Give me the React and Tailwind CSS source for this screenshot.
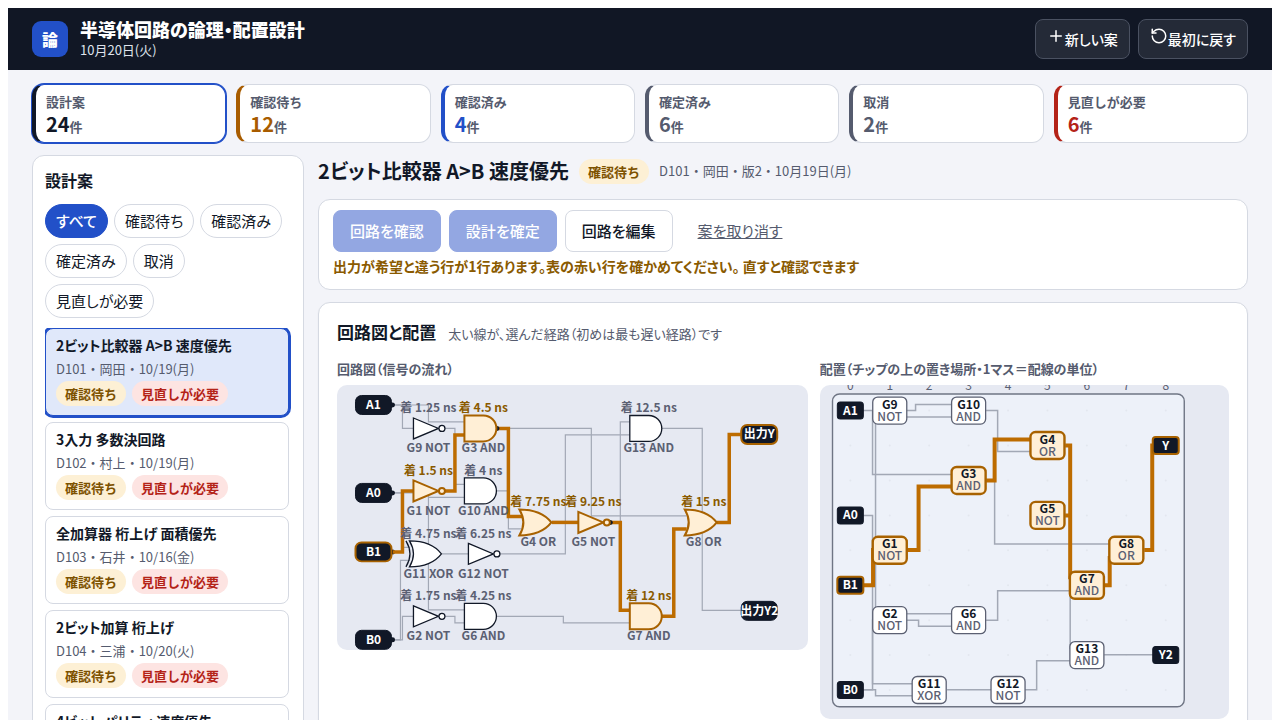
import { useState } from 'react';
import { Plus, RotateCcw } from 'lucide-react';

const STATS = [
  { label: '設計案', count: 24, border: 'border-l-[#111827]', text: 'text-[#111827]' },
  { label: '確認待ち', count: 12, border: 'border-l-[#a85c00]', text: 'text-[#a85c00]' },
  { label: '確認済み', count: 4, border: 'border-l-[#2250c8]', text: 'text-[#2250c8]' },
  { label: '確定済み', count: 6, border: 'border-l-[#555b6e]', text: 'text-[#555b6e]' },
  { label: '取消', count: 2, border: 'border-l-[#555b6e]', text: 'text-[#555b6e]' },
  { label: '見直しが必要', count: 6, border: 'border-l-[#b42318]', text: 'text-[#b42318]' },
];

const FILTERS = ['すべて', '確認待ち', '確認済み', '確定済み', '取消', '見直しが必要'];

const DESIGNS = [
  { id: 'D101', name: '2ビット比較器 A>B 速度優先', owner: '岡田', date: '10/19(月)' },
  { id: 'D102', name: '3入力 多数決回路', owner: '村上', date: '10/19(月)' },
  { id: 'D103', name: '全加算器 桁上げ 面積優先', owner: '石井', date: '10/16(金)' },
  { id: 'D104', name: '2ビット加算 桁上げ', owner: '三浦', date: '10/20(火)' },
  { id: 'D105', name: '4ビット パリティ 速度優先', owner: '岡田', date: '10/20(火)' },
];

// circuit diagram
const GATES = [
  { id: 'G9', type: 'NOT', x: 91.5, y: 43.5, time: '1.25' },
  { id: 'G1', type: 'NOT', x: 91.5, y: 106, time: '1.5', hot: true },
  { id: 'G11', type: 'XOR', x: 91.5, y: 169, time: '4.75' },
  { id: 'G2', type: 'NOT', x: 91.5, y: 231.5, time: '1.75' },
  { id: 'G3', type: 'AND', x: 146.5, y: 43.5, time: '4.5', hot: true },
  { id: 'G10', type: 'AND', x: 146.5, y: 106, time: '4' },
  { id: 'G12', type: 'NOT', x: 146.5, y: 169, time: '6.25' },
  { id: 'G6', type: 'AND', x: 146.5, y: 231.5, time: '4.25' },
  { id: 'G4', type: 'OR', x: 201.5, y: 137.5, time: '7.75', hot: true },
  { id: 'G5', type: 'NOT', x: 256.5, y: 137.5, time: '9.25', hot: true },
  { id: 'G13', type: 'AND', x: 312, y: 43.5, time: '12.5' },
  { id: 'G7', type: 'AND', x: 312, y: 231.5, time: '12', hot: true },
  { id: 'G8', type: 'OR', x: 367, y: 137.5, time: '15', hot: true },
];

const PORTS = [
  { label: 'A1', x: 36.5, y: 20 },
  { label: 'A0', x: 36.5, y: 108 },
  { label: 'B1', x: 36.5, y: 167, hot: true },
  { label: 'B0', x: 36.5, y: 255 },
  { label: '出力Y', x: 422.5, y: 49.5, hot: true },
  { label: '出力Y2', x: 422.5, y: 226 },
];

const WIRES = [
  'M56 20H65.5V43.5H77',
  'M56 20H91.5V37H128',
  'M108 43.5H118V99.5H128',
  'M56 108H91.5V112.5H128',
  'M91.5 112.5V225H128',
  'M56 108H65.5V162.5H73',
  'M56 255H63.5V175.5H73',
  'M56 255H65.5V231.5H77',
  'M105 169H132',
  'M163 169H228.5V50H293',
  'M160 43.5H254.5V131H350',
  'M160 106H171.5V144H186',
  'M283.5 137.5V37H293',
  'M108 231.5H118V238H128',
  'M160 231.5H226.5V238H293',
  'M325 43.5H365.5V225.5H404',
];

const HOT_WIRES = [
  'M56 167H65.5V106H77',
  'M108 106H118V50H128',
  'M160 43.5H171.5V131.5H186',
  'M215 137.5H242',
  'M273 137.5H283.5V225.5H293',
  'M325 231.5H337V144H350',
  'M380 137.5H392.5V49.5H404',
];

// chip placement, in grid cells
const CELLS = [
  { id: 'A1', col: 0, row: 0, pin: true },
  { id: 'A0', col: 0, row: 3, pin: true },
  { id: 'B1', col: 0, row: 5, pin: true, hot: true },
  { id: 'B0', col: 0, row: 8, pin: true },
  { id: 'Y', col: 8, row: 1, pin: true, hot: true },
  { id: 'Y2', col: 8, row: 7, pin: true },
  { id: 'G9', type: 'NOT', col: 1, row: 0 },
  { id: 'G10', type: 'AND', col: 3, row: 0 },
  { id: 'G4', type: 'OR', col: 5, row: 1, hot: true },
  { id: 'G3', type: 'AND', col: 3, row: 2, hot: true },
  { id: 'G5', type: 'NOT', col: 5, row: 3, hot: true },
  { id: 'G1', type: 'NOT', col: 1, row: 4, hot: true },
  { id: 'G8', type: 'OR', col: 7, row: 4, hot: true },
  { id: 'G7', type: 'AND', col: 6, row: 5, hot: true },
  { id: 'G2', type: 'NOT', col: 1, row: 6 },
  { id: 'G6', type: 'AND', col: 3, row: 6 },
  { id: 'G13', type: 'AND', col: 6, row: 7 },
  { id: 'G11', type: 'XOR', col: 2, row: 8 },
  { id: 'G12', type: 'NOT', col: 4, row: 8 },
];

const ROUTES = [
  'M43 25.5H53',
  'M52.5 25.5V89.5H132',
  'M87 25.5H95.5V19.5H132',
  'M132 32H55.5V228.5H132',
  'M43 130.5H52.5V298.5H93',
  'M43 304.5H52.5V235H56',
  'M43 304.5H55.5V310.5H93',
  'M87 235H98.5V241H132',
  'M166 235H177.5V205.5H250',
  'M127 304.5H171',
  'M205 304.5H216.5V275.5H250',
  'M166 25.5H177.5V66.5H210',
  'M174.5 95.5V159H289',
  'M250 130.5V264',
  'M284 269.5H333',
];

const HOT_ROUTES = [
  'M43 200H53V163',
  'M87 165H98.5V101.5H132',
  'M166 95.5H174.5V54.5H210',
  'M245 60.5H250V194',
  'M245 130.5H250',
  'M284 200H289.5V171',
  'M324 165H332V60.5H334',
];

const SCALE = [0, 1, 2, 3, 4, 5, 6, 7, 8];

const cellX = (col) => 30.3 + col * 39.4;
const cellY = (row) => 25.6 + row * 34.9;

function Badge({ tone, children }) {
  const color = tone === 'red' ? 'bg-[#fde4e2] text-[#b42318]' : 'bg-[#fdf0d5] text-[#7d5200]';
  return (
    <span className={`inline-block rounded-full px-[9px] py-[3px] text-[13px] leading-[19px] font-bold [font-feature-settings:normal] ${color}`}>
      {children}
    </span>
  );
}

function GateShape({ type, hot }) {
  const style = { fill: hot ? '#ffefd6' : '#fff', stroke: hot ? '#a86200' : '#111827', strokeWidth: hot ? 2 : 1.3 };
  if (type === 'NOT') {
    return (
      <g {...style}>
        <path d="M-15 -10.5L10 0L-15 10.5Z" />
        <circle cx="13.5" cy="0" r="3" />
      </g>
    );
  }
  if (type === 'AND') {
    return <path {...style} d="M-19 -13H0A13 13 0 0 1 0 13H-19Z" />;
  }
  return (
    <g {...style}>
      <path d="M-19 -13Q3 -13 13 0Q3 13 -19 13Q-11 0 -19 -13Z" />
      {type === 'XOR' && <path d="M-22.5 -13Q-14.5 0 -22.5 13" fill="none" />}
    </g>
  );
}

function CircuitDiagram() {
  return (
    <svg viewBox="0 0 471 265" className="block w-full rounded-[10px] bg-[#e6e9f2]" role="img" aria-label="回路図">
      <g fill="none" stroke="#a2a8b5" strokeWidth="1.2">
        {WIRES.map((d) => (
          <path key={d} d={d} />
        ))}
      </g>
      {[20, 108, 167, 255].map((y) => (
        <circle key={y} cx="55.5" cy={y} r="2.5" fill="#111827" />
      ))}
      <g fill="none" stroke="#bd6c00" strokeWidth="3.5">
        {HOT_WIRES.map((d) => (
          <path key={d} d={d} />
        ))}
      </g>
      <circle cx="160" cy="43.5" r="2.5" fill="#111827" />
      <circle cx="273.5" cy="137.5" r="2.5" fill="#111827" />
      {GATES.map((gate) => (
        <g key={gate.id} transform={`translate(${gate.x} ${gate.y})`} textAnchor="middle" className="text-[12px] font-bold">
          <GateShape type={gate.type} hot={gate.hot} />
          <text y="-16" fill={gate.hot ? '#8a5a00' : '#5b6072'}>
            着 {gate.time} ns
          </text>
          <text y="24" fill="#5b6072">
            {gate.id} {gate.type}
          </text>
        </g>
      ))}
      {PORTS.map((port) => (
        <g key={port.label} transform={`translate(${port.x} ${port.y})`}>
          <rect
            x="-18"
            y="-9.5"
            width="36"
            height="19"
            rx="6"
            fill="#111827"
            stroke={port.hot ? '#a86200' : '#111827'}
            strokeWidth={port.hot ? 2 : 1}
          />
          <text y="4" textAnchor="middle" fill="#fff" className="text-[12px] font-bold">
            {port.label}
          </text>
        </g>
      ))}
    </svg>
  );
}

function PlacementDiagram() {
  return (
    <svg viewBox="0 0 409 334" className="block w-full rounded-[10px] bg-[#e6e9f2]" role="img" aria-label="配置">
      <rect x="12.5" y="9" width="351.5" height="312.5" rx="7" fill="#edf1f9" stroke="#6f7584" strokeWidth="1.4" />
      {SCALE.map((col) => (
        <text key={col} x={cellX(col)} y="4.5" textAnchor="middle" fill="#5b6072" className="text-[12px]">
          {col}
        </text>
      ))}
      {SCALE.map((row) => SCALE.map((col) => <circle key={`${row}-${col}`} cx={cellX(col)} cy={cellY(row)} r="1" fill="#e3e7ef" />))}
      <g fill="none" stroke="#a2a8b5" strokeWidth="1.5">
        {ROUTES.map((d) => (
          <path key={d} d={d} />
        ))}
      </g>
      <g fill="none" stroke="#bd6c00" strokeWidth="4">
        {HOT_ROUTES.map((d) => (
          <path key={d} d={d} />
        ))}
      </g>
      {CELLS.map((cell) => (
        <g key={cell.id} transform={`translate(${cellX(cell.col)} ${cellY(cell.row)})`} textAnchor="middle" className="text-[12px] font-bold">
          {cell.pin ? (
            <>
              <rect
                x="-13"
                y="-8.5"
                width="26"
                height="17"
                rx="3"
                fill="#111827"
                stroke={cell.hot ? '#a86200' : '#111827'}
                strokeWidth={cell.hot ? 2 : 1}
              />
              <text y="4" fill="#fff">
                {cell.id}
              </text>
            </>
          ) : (
            <>
              <rect
                x="-17"
                y="-13.5"
                width="34"
                height="27"
                rx="5"
                fill={cell.hot ? '#ffefd6' : '#fff'}
                stroke={cell.hot ? '#a86200' : '#5b6072'}
                strokeWidth={cell.hot ? 2.4 : 1.3}
              />
              <text y="-2" fill="#111827">
                {cell.id}
              </text>
              <text y="10" fill="#5b6072" className="font-medium">
                {cell.type}
              </text>
            </>
          )}
        </g>
      ))}
    </svg>
  );
}

function Header() {
  const button = 'h-10 rounded-lg border border-[#4a5161] bg-[#242a37] px-[11px] pb-[2px] text-[14px] font-medium text-white';
  return (
    <header className="flex items-center gap-3 bg-[#111725] px-6 py-[10px] text-white">
      <div className="flex size-9 items-center justify-center rounded-[9px] bg-[#2250c8] text-[16px] font-black">論</div>
      <div className="flex-1 pb-px">
        <h1 className="text-[18px] leading-[22px] font-black">半導体回路の論理・配置設計</h1>
        <p className="text-[13px] leading-[19px] text-[#dfe3ec]">10月20日(火)</p>
      </div>
      <div className="flex gap-2">
        <button type="button" className={button}>
          <Plus size={18} className="inline align-baseline" />
          新しい案
        </button>
        <button type="button" className={button}>
          <RotateCcw size={18} className="inline align-baseline" />
          最初に戻す
        </button>
      </div>
    </header>
  );
}

function Sidebar({ filter, onFilter, selected, onSelect }) {
  return (
    <aside className="rounded-xl border border-[#d5d9e2] bg-white p-3">
      <h2 className="mb-3 text-[16px] leading-6 font-bold">設計案</h2>
      <div className="mb-[10px] flex flex-wrap gap-[6px]">
        {FILTERS.map((name) => (
          <button
            key={name}
            type="button"
            onClick={() => onFilter(name)}
            className={`h-[34px] rounded-full border px-[10px] text-[15px] ${
              name === filter ? 'border-[#2250c8] bg-[#2250c8] font-medium text-white' : 'border-[#d5d9e2] bg-white'
            }`}
          >
            {name}
          </button>
        ))}
      </div>
      <div className="flex flex-col gap-[6px] overflow-hidden pr-[2px] pb-[2px]">
        {DESIGNS.map((design) => (
          <button
            key={design.id}
            type="button"
            onClick={() => onSelect(design.id)}
            className={`block rounded-lg border px-[10px] py-[6px] text-left ${
              design.id === selected ? 'border-[#2250c8] bg-[#e0e8fa] ring-2 ring-[#2250c8]' : 'border-[#d5d9e2] bg-white'
            }`}
          >
            <div className="text-[14px] leading-[21px] font-bold">{design.name}</div>
            <div className="mt-[3px] text-[13px] leading-5 text-[#555b6e] [font-feature-settings:normal]">
              {design.id}・{design.owner}・{design.date}
            </div>
            <div className="mt-[2px] flex gap-[6px] pb-[3px]">
              <Badge>確認待ち</Badge>
              <Badge tone="red">見直しが必要</Badge>
            </div>
          </button>
        ))}
      </div>
    </aside>
  );
}

export default function App() {
  const [filter, setFilter] = useState('すべて');
  const [selected, setSelected] = useState('D101');
  const action = 'h-[42px] rounded-lg border px-4 text-[15px]';

  return (
    <div className="h-screen overflow-hidden bg-white px-2 pt-2 font-['Noto_Sans_CJK_JP',sans-serif] text-[#111827] [font-feature-settings:'palt']">
      <div className="min-h-full bg-[#f3f4f9]">
        <Header />
        <div className="px-6 pt-[14px]">
          <div className="mb-3 grid grid-cols-6 gap-[10px]">
            {STATS.map((stat, index) => (
              <button
                key={stat.label}
                type="button"
                className={`rounded-xl border border-l-4 bg-white px-[10px] pt-[7px] pb-[3px] text-left ${stat.border} ${
                  index === 0 ? 'border-y-[#2250c8] border-r-[#2250c8] ring-1 ring-[#2250c8]' : 'border-y-[#d5d9e2] border-r-[#d5d9e2]'
                }`}
              >
                <div className="text-[13px] leading-5 font-bold text-[#555b6e] [font-feature-settings:normal]">{stat.label}</div>
                <div className="text-[13px] leading-6 font-bold text-[#555b6e]">
                  <span className={`text-[20px] ${stat.text}`}>{stat.count}</span>件
                </div>
              </button>
            ))}
          </div>

          <div className="grid grid-cols-[272px_minmax(0,1fr)] items-start gap-[14px]">
            <Sidebar filter={filter} onFilter={setFilter} selected={selected} onSelect={setSelected} />

            <main>
              <div className="mb-3 flex h-8 items-center gap-[10px]">
                <h2 className="text-[20px] font-bold">2ビット比較器 A&gt;B 速度優先</h2>
                <Badge>確認待ち</Badge>
                <span className="text-[13px] text-[#555b6e] [font-feature-settings:normal]">D101・岡田・版2・10月19日(月)</span>
              </div>

              <section className="mb-3 rounded-xl border border-[#d5d9e2] bg-white px-[14px] pt-[10px] pb-3">
                <div className="flex gap-2">
                  <button type="button" disabled className={`${action} border-[#93a7e2] bg-[#93a7e2] font-medium text-white`}>
                    回路を確認
                  </button>
                  <button type="button" disabled className={`${action} border-[#93a7e2] bg-[#93a7e2] font-medium text-white`}>
                    設計を確定
                  </button>
                  <button type="button" className={`${action} border-[#d5d9e2] bg-white font-medium`}>
                    回路を編集
                  </button>
                  <button type="button" className={`${action} border-transparent text-[#555b6e] underline`}>
                    案を取り消す
                  </button>
                </div>
                <p className="mt-1 text-[14px] leading-[21px] font-bold text-[#8a5a00]">
                  出力が希望と違う行が1行あります。表の赤い行を確かめてください。 直すと確認できます
                </p>
              </section>

              <section className="rounded-xl border border-[#d5d9e2] bg-white px-[18px] pt-[17px] pb-[18px] shadow-xs">
                <div className="mb-[15px] flex items-baseline gap-3">
                  <h3 className="text-[17px] leading-6 font-bold">回路図と配置</h3>
                  <p className="text-[13px] text-[#555b6e]">太い線が、選んだ経路（初めは最も遅い経路）です</p>
                </div>
                <div className="grid grid-cols-[1.15fr_1fr] items-start gap-3">
                  <div>
                    <h4 className="mb-[6px] text-[13px] leading-5 font-bold text-[#555b6e]">回路図（信号の流れ）</h4>
                    <CircuitDiagram />
                  </div>
                  <div>
                    <h4 className="mb-[6px] text-[13px] leading-5 font-bold text-[#555b6e]">
                      配置（チップの上の置き場所・1マス＝配線の単位）
                    </h4>
                    <PlacementDiagram />
                  </div>
                </div>
              </section>
            </main>
          </div>
        </div>
      </div>
    </div>
  );
}
